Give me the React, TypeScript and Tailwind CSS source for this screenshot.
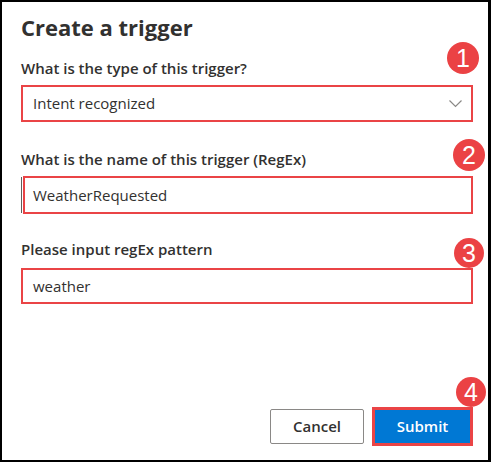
const Badge = ({ n, className }: { n: string; className: string }) => (
  <div
    className={`absolute flex items-center justify-center rounded-full bg-[#eb4244] text-[25px] leading-none text-white font-['Liberation_Sans',Arial,sans-serif] ${className}`}
  >
    {n}
  </div>
)

const Label = ({ children, className = '' }: { children: React.ReactNode; className?: string }) => (
  <div className={`text-[15px] font-semibold leading-[20px] text-[#323130] ${className}`}>{children}</div>
)

export default function App() {
  return (
    <div className="relative flex h-[462px] w-[491px] flex-col border-2 border-r-[3px] border-black bg-white pl-[19px] pr-[15px] pt-[10px] pb-[14px] font-['Open_Sans','Noto_Sans',sans-serif]">
      <h1 className="text-[22px] font-bold leading-[30px] text-[#323130]">Create a trigger</h1>

      <Label className="mt-[16px]">What is the type of this trigger?</Label>
      <div className="mt-[7px] flex h-[37px] items-center justify-between border-2 border-[#ea4446] pl-[10px] pr-[9px]">
        <span className="text-[15px] text-[#323130]">Intent recognized</span>
        <svg width="13" height="8" viewBox="0 0 13 8" fill="none">
          <path d="M0.5 0.5 L6.5 6.5 L12.5 0.5" stroke="#8a8886" strokeWidth="1.2" />
        </svg>
      </div>

      <Label className="mt-[27px]">What is the name of this trigger (RegEx)</Label>
      <div className="mt-[7px] flex h-[38px] items-stretch">
        <div className="my-[1px] w-[1px] bg-[#605e5c]" />
        <div className="ml-[1px] flex flex-1 items-center border-2 border-[#ea4446] pl-[8px]">
          <span className="text-[15px] text-[#323130]">WeatherRequested</span>
        </div>
      </div>

      <Label className="mt-[25px]">Please input regEx pattern</Label>
      <div className="mt-[9px] flex h-[36px] items-center border-2 border-[#ea4446] pl-[10px]">
        <span className="text-[15px] text-[#323130]">weather</span>
      </div>

      <div className="mt-auto flex items-center justify-end gap-[8px]">
        <button className="h-[35px] w-[94px] rounded-[2px] border border-[#8a8886] bg-white text-[15px] font-semibold text-[#323130]">
          Cancel
        </button>
        <div className="h-[39px] w-[101px] border-[3px] border-[#ea4446] bg-[#0078d4] flex items-center justify-center">
          <span className="text-[15px] font-semibold text-white">Submit</span>
        </div>
      </div>

      <Badge n="1" className="left-[445px] top-[40px] h-[32px] w-[32px]" />
      <Badge n="2" className="left-[451px] top-[137px] h-[32px] w-[32px]" />
      <Badge n="3" className="left-[452px] top-[236px] h-[30px] w-[30px]" />
      <Badge n="4" className="left-[454px] top-[375px] h-[30px] w-[30px]" />
    </div>
  )
}
